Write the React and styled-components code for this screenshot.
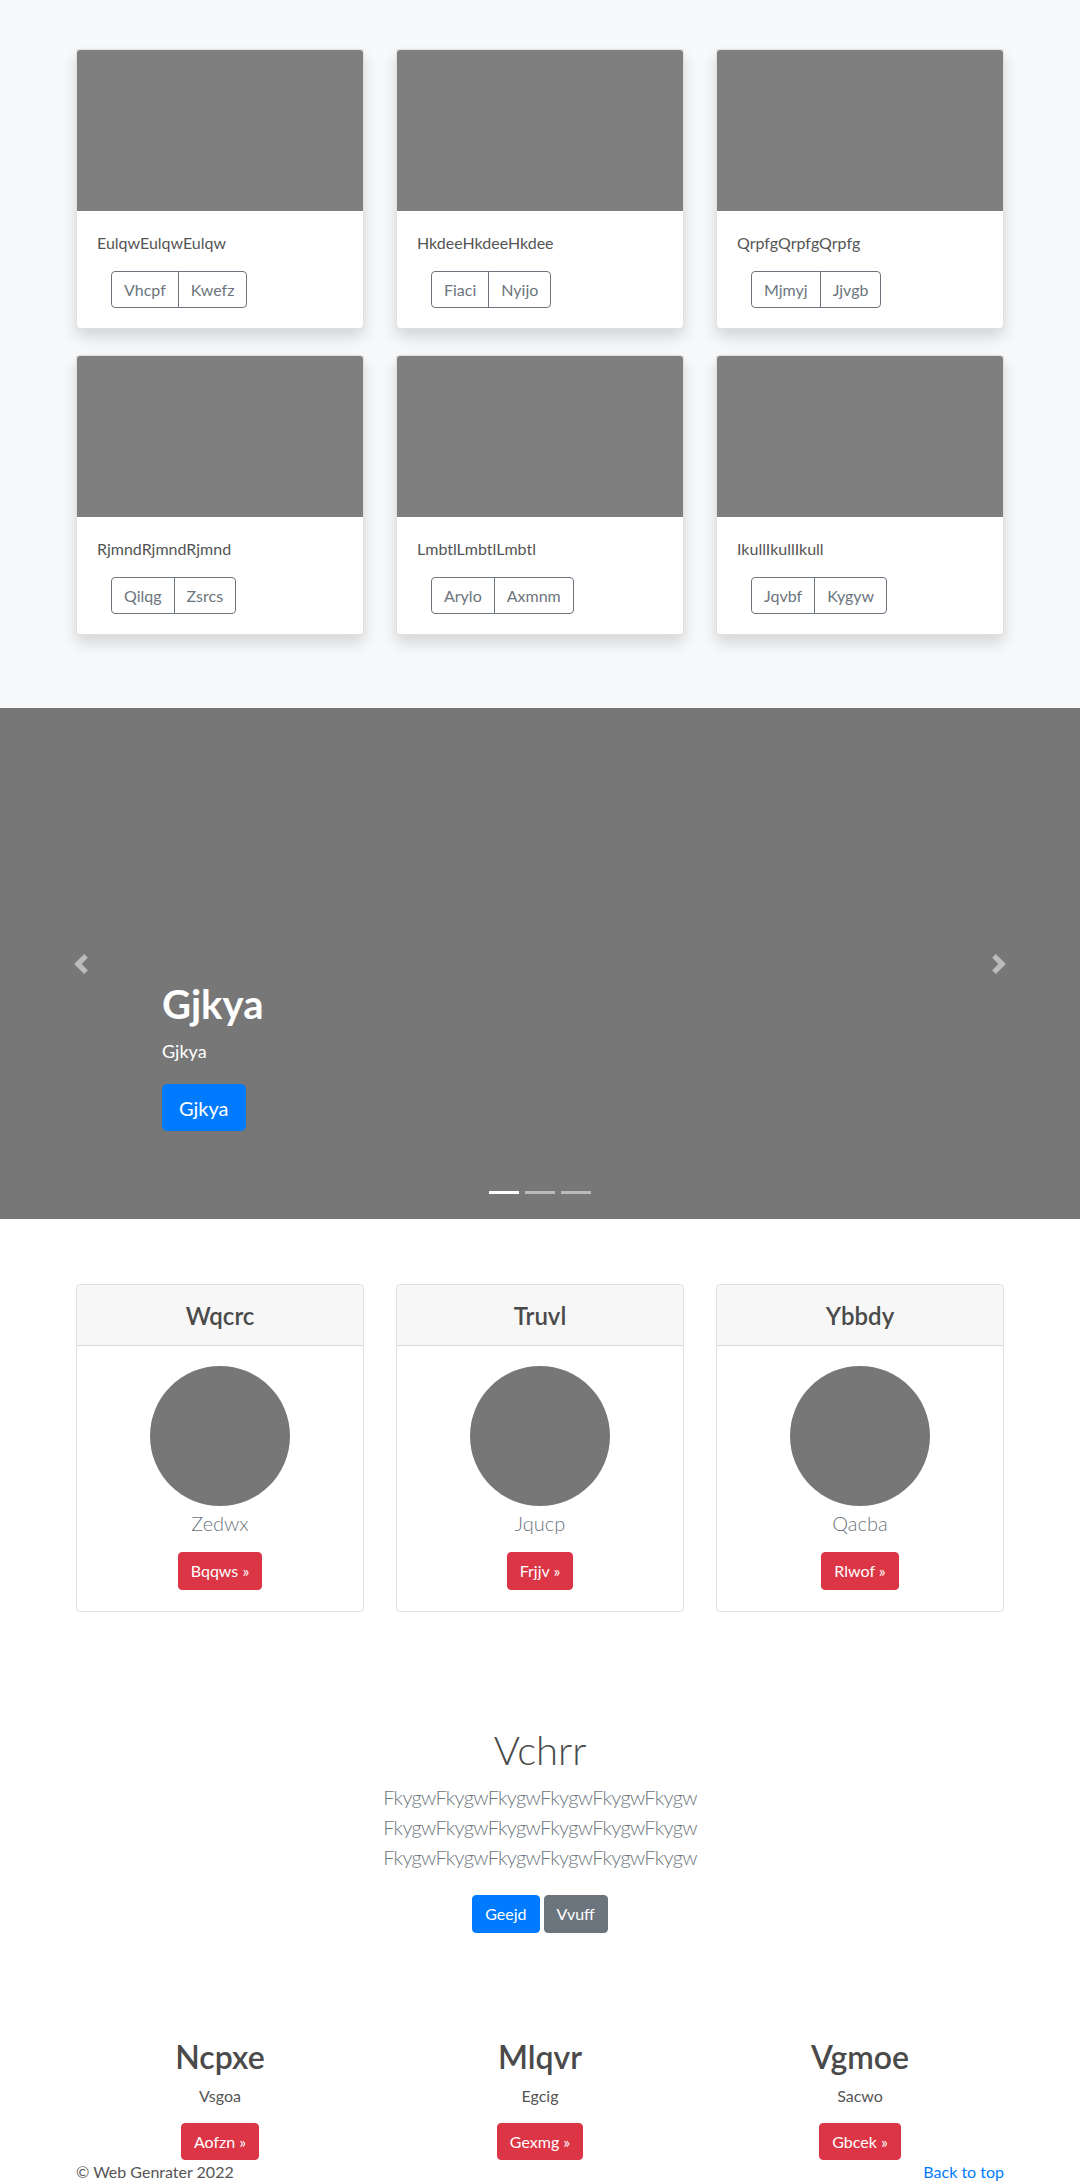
import React from 'react';
import styled, { createGlobalStyle } from 'styled-components';

const GlobalStyle = createGlobalStyle`
    body {
        margin: 0;
        font-family: Lato, "Open Sans", sans-serif;
        color: #212529;
        background: #fff;
    }
    * { box-sizing: border-box; }
`;

const albumItems = [
    { text: 'EulqwEulqwEulqw', buttons: ['Vhcpf', 'Kwefz'] },
    { text: 'HkdeeHkdeeHkdee', buttons: ['Fiaci', 'Nyijo'] },
    { text: 'QrpfgQrpfgQrpfg', buttons: ['Mjmyj', 'Jjvgb'] },
    { text: 'RjmndRjmndRjmnd', buttons: ['Qilqg', 'Zsrcs'] },
    { text: 'LmbtlLmbtlLmbtl', buttons: ['Arylo', 'Axmnm'] },
    { text: 'IkullIkullIkull', buttons: ['Jqvbf', 'Kygyw'] },
];

const pricing = [
    { title: 'Wqcrc', name: 'Zedwx', action: 'Bqqws' },
    { title: 'Truvl', name: 'Jqucp', action: 'Frjjv' },
    { title: 'Ybbdy', name: 'Qacba', action: 'Rlwof' },
];

const marketing = [
    { title: 'Ncpxe', text: 'Vsgoa', action: 'Aofzn' },
    { title: 'Mlqvr', text: 'Egcig', action: 'Gexmg' },
    { title: 'Vgmoe', text: 'Sacwo', action: 'Gbcek' },
];

const btnColors = {
    primary: '#007bff',
    secondary: '#6c757d',
    danger: '#dc3545',
};

export default function App () {
    return (
        <>
            <GlobalStyle />
            <Album>
                <Container>
                    <Grid>
                        {albumItems.map((item) => (
                            <AlbumCard key={item.text}>
                                <Thumb />
                                <CardBody>
                                    <CardText>{item.text}</CardText>
                                    <BtnGroup>
                                        {item.buttons.map((b) => (
                                            <OutlineBtn key={b}>{b}</OutlineBtn>
                                        ))}
                                    </BtnGroup>
                                </CardBody>
                            </AlbumCard>
                        ))}
                    </Grid>
                </Container>
            </Album>

            <Carousel>
                <Control side="left">
                    <svg width="20" height="20" viewBox="0 0 8 8">
                        <path fill="#fff" d="M5.25 0l-4 4 4 4 1.5-1.5L4.25 4l2.5-2.5L5.25 0z" />
                    </svg>
                </Control>
                <Caption>
                    <CaptionTitle>Gjkya</CaptionTitle>
                    <CaptionText>Gjkya</CaptionText>
                    <div>
                        <Button variant="primary" size="lg">Gjkya</Button>
                    </div>
                </Caption>
                <Control side="right">
                    <svg width="20" height="20" viewBox="0 0 8 8">
                        <path fill="#fff" d="M2.75 0l-1.5 1.5L3.75 4l-2.5 2.5L2.75 8l4-4-4-4z" />
                    </svg>
                </Control>
                <Indicators>
                    <Indicator active />
                    <Indicator />
                    <Indicator />
                </Indicators>
            </Carousel>

            <Pricing>
                <Container>
                    <Grid>
                        {pricing.map((p) => (
                            <PriceCard key={p.title}>
                                <PriceHeader>
                                    <PriceTitle>{p.title}</PriceTitle>
                                </PriceHeader>
                                <PriceBody>
                                    <Avatar />
                                    <PriceName>{p.name}</PriceName>
                                    <Button variant="danger">{p.action} »</Button>
                                </PriceBody>
                            </PriceCard>
                        ))}
                    </Grid>
                </Container>
            </Pricing>

            <Jumbo>
                <JumboTitle>Vchrr</JumboTitle>
                <Lead>FkygwFkygwFkygwFkygwFkygwFkygw FkygwFkygwFkygwFkygwFkygwFkygw FkygwFkygwFkygwFkygwFkygwFkygw</Lead>
                <JumboActions>
                    <Button variant="primary">Geejd</Button>
                    <Button variant="secondary">Vvuff</Button>
                </JumboActions>
            </Jumbo>

            <Marketing>
                {marketing.map((m) => (
                    <MarketingCol key={m.title}>
                        <MarketingTitle>{m.title}</MarketingTitle>
                        <MarketingText>{m.text}</MarketingText>
                        <Button variant="danger" short>{m.action} »</Button>
                    </MarketingCol>
                ))}
            </Marketing>

            <Footer>
                <FooterText>© Web Genrater 2022</FooterText>
                <FooterLink href="#">Back to top</FooterLink>
            </Footer>
        </>
    );
}

const Container = styled.div`
    width: 960px;
    margin: 0 auto;
    padding: 0 16px;
`;

const Grid = styled.div`
    display: grid;
    grid-template-columns: repeat(3, 1fr);
    column-gap: 32px;
    row-gap: 26px;
`;

const Album = styled.section`
    background-color: #f8f9fa;
    padding: 49px 0 73px;
`;

const AlbumCard = styled.div`
    background: #fff;
    border: 1px solid rgba(0, 0, 0, 0.125);
    border-radius: 4px;
    overflow: hidden;
    box-shadow: 0 8px 16px rgba(0, 0, 0, 0.15);
`;

const Thumb = styled.div`
    height: 161px;
    background-color: #7f7f7f;
`;

const CardBody = styled.div`
    padding: 20px;
`;

const CardText = styled.p`
    margin: 0 0 16px;
    font-size: 16px;
    line-height: 24px;
    color: #555;
`;

const BtnGroup = styled.div`
    display: inline-flex;
    margin-left: 14px;
`;

const OutlineBtn = styled.button`
    font-family: Lato, sans-serif;
    font-size: 16px;
    line-height: 24px;
    padding: 5.5px 12px;
    color: #6c757d;
    background: transparent;
    border: 1px solid #6c757d;
    border-radius: 0;

    &:first-child {
        border-radius: 4px 0 0 4px;
    }
    &:last-child {
        margin-left: -1px;
        border-radius: 0 4px 4px 0;
    }
`;

const Button = styled.button`
    font-family: Lato, sans-serif;
    font-size: ${(p) => (p.size === 'lg' ? '20px' : '16px')};
    line-height: ${(p) => (p.size === 'lg' ? '30px' : '24px')};
    padding: ${(p) => (p.size === 'lg' ? '7.5px 16px' : p.short ? '5.5px 12px' : '6px 12px')};
    color: #fff;
    background-color: ${(p) => btnColors[p.variant]};
    border: 1px solid ${(p) => btnColors[p.variant]};
    border-radius: ${(p) => (p.size === 'lg' ? '5px' : '4px')};
`;

const Carousel = styled.section`
    position: relative;
    height: 511px;
    background-color: #777;
    display: flex;
    flex-direction: column;
    justify-content: flex-end;
`;

const Caption = styled.div`
    padding: 0 15% 88px;
    color: #fff;
`;

const CaptionTitle = styled.h1`
    margin: 0 0 10px;
    font-size: 40px;
    line-height: 48px;
    font-weight: 700;
`;

const CaptionText = styled.p`
    margin: 0 0 19px;
    font-size: 18px;
    line-height: 27px;
`;

const Control = styled.div`
    position: absolute;
    top: 0;
    bottom: 0;
    ${(p) => (p.side === 'left' ? 'left: 0;' : 'right: 0;')}
    width: 15%;
    display: flex;
    align-items: center;
    justify-content: center;
    opacity: 0.5;
`;

const Indicators = styled.div`
    position: absolute;
    left: 0;
    right: 0;
    bottom: 25px;
    display: flex;
    justify-content: center;
    gap: 6px;
`;

const Indicator = styled.span`
    width: 30px;
    height: 3px;
    background-color: ${(p) => (p.active ? '#fff' : 'rgba(255, 255, 255, 0.5)')};
`;

const Pricing = styled.section`
    padding-top: 65px;
`;

const PriceCard = styled.div`
    border: 1px solid rgba(0, 0, 0, 0.125);
    border-radius: 4px;
    overflow: hidden;
`;

const PriceHeader = styled.div`
    background-color: #f7f7f7;
    border-bottom: 1px solid rgba(0, 0, 0, 0.125);
    padding: 15.5px 20px;
    text-align: center;
`;

const PriceTitle = styled.h4`
    margin: 0;
    font-size: 24px;
    line-height: 29px;
    font-weight: 600;
    color: #4a4a4a;
`;

const PriceBody = styled.div`
    padding: 20px 20px 21px;
    display: flex;
    flex-direction: column;
    align-items: center;
`;

const Avatar = styled.div`
    width: 140px;
    height: 140px;
    border-radius: 50%;
    background-color: #777;
`;

const PriceName = styled.p`
    margin: 2px 0 14px;
    font-size: 20px;
    line-height: 30px;
    font-weight: 300;
    color: #6c757d;
`;

const Jumbo = styled.section`
    padding-top: 114px;
    text-align: center;
`;

const JumboTitle = styled.h1`
    margin: 0 0 8px;
    font-size: 40px;
    line-height: 48px;
    font-weight: 300;
    color: #4a4a4a;
`;

const Lead = styled.p`
    max-width: 480px;
    margin: 0 auto;
    font-size: 20px;
    line-height: 30px;
    font-weight: 300;
    letter-spacing: -0.7px;
    color: #6c757d;
`;

const JumboActions = styled.div`
    display: flex;
    justify-content: center;
    gap: 4px;
    margin-top: 23px;
`;

const Marketing = styled.section`
    width: 960px;
    margin: 0 auto;
    padding-top: 105px;
    display: grid;
    grid-template-columns: repeat(3, 1fr);
    text-align: center;
`;

const MarketingCol = styled.div`
    display: flex;
    flex-direction: column;
    align-items: center;
`;

const MarketingTitle = styled.h2`
    margin: 0 0 8px;
    font-size: 32px;
    line-height: 38px;
    font-weight: 600;
    color: #4a4a4a;
`;

const MarketingText = styled.p`
    margin: 0 0 15px;
    font-size: 16px;
    line-height: 24px;
    color: #555;
`;

const Footer = styled.footer`
    width: 960px;
    margin: 0 auto;
    padding: 0 16px;
    display: flex;
    justify-content: space-between;
    font-size: 16px;
    line-height: 24px;
`;

const FooterText = styled.p`
    margin: 0;
    color: #555;
`;

const FooterLink = styled.a`
    color: #007bff;
    text-decoration: none;
`;
